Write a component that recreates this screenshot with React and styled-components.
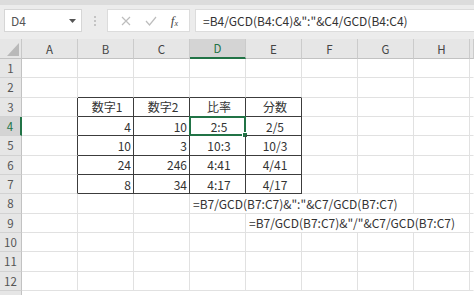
import styled, { createGlobalStyle } from "styled-components";

const GlobalStyle = createGlobalStyle`
  html, body {
    margin: 0;
    padding: 0;
    background: #ffffff;
    overflow: hidden;
  }
  body {
    font-family: "Noto Sans CJK JP", "Noto Sans", sans-serif;
  }
`;

const Page = styled.div`
  width: 474px;
  height: 295px;
  display: flex;
  flex-direction: column;
  overflow: hidden;
  background: #ffffff;
`;

const Toolbar = styled.div`
  flex-shrink: 0;
  height: 39px;
  box-sizing: border-box;
  background: #ececec;
  border-top: 5px solid #dcdcdc;
  display: flex;
  align-items: flex-start;
  padding: 4px 0 0 4px;
`;

const NameBox = styled.div`
  width: 78px;
  height: 23px;
  box-sizing: border-box;
  background: #fff;
  border: 1px solid #d6d6d6;
  display: flex;
  align-items: center;
  justify-content: space-between;
  padding: 0 5px 0 6px;
  font-size: 12px;
  color: #555;
`;

const Dots = styled.div`
  width: 25px;
  height: 23px;
  display: flex;
  flex-direction: column;
  align-items: center;
  justify-content: center;
  gap: 2px;
  & span {
    width: 2px;
    height: 2px;
    background: #c4c4c4;
  }
`;

const Buttons = styled.div`
  width: 83px;
  height: 23px;
  box-sizing: border-box;
  background: #fff;
  border: 1px solid #dcdcdc;
  display: flex;
  align-items: center;
  justify-content: space-around;
  padding: 0 4px 0 6px;
`;

const Fx = styled.span`
  font-family: "Liberation Serif", serif;
  font-style: italic;
  font-size: 13px;
  color: #444;
  & sub {
    font-size: 8px;
    vertical-align: -1px;
  }
`;

const FormulaBar = styled.div`
  flex: 1;
  height: 23px;
  margin-left: 5px;
  box-sizing: border-box;
  background: #fff;
  border: 1px solid #dcdcdc;
  border-right: none;
  display: flex;
  align-items: center;
  padding-left: 7px;
  font-size: 12px;
  color: #333;
  white-space: nowrap;
`;

const Sheet = styled.div`
  flex-shrink: 0;
  display: grid;
  grid-template-columns: 22px repeat(8, 56px) 1fr;
  grid-template-rows: 20px repeat(13, 19.33px);
`;

const Corner = styled.div`
  background: #e6e6e6;
  border-right: 1px solid #c8c8c8;
  border-bottom: 1px solid #c2c2c2;
  box-sizing: border-box;
  display: flex;
  align-items: flex-end;
  justify-content: flex-end;
  padding: 0 2px 2px 0;
  &::after {
    content: "";
    width: 12px;
    height: 13px;
    background: #b9b9b9;
    clip-path: polygon(100% 0, 100% 100%, 0 100%);
  }
`;

const ColHead = styled.div`
  box-sizing: border-box;
  background: ${(p) => (p.$active ? "#d4d4d4" : "#e6e6e6")};
  border-right: 1px solid #cbcbcb;
  border-bottom: ${(p) => (p.$active ? "2px solid #217346" : "1px solid #c2c2c2")};
  display: flex;
  align-items: center;
  justify-content: center;
  font-size: 11.5px;
  color: ${(p) => (p.$active ? "#217346" : "#444")};
`;

const RowHead = styled.div`
  box-sizing: border-box;
  background: ${(p) => (p.$active ? "#d4d4d4" : "#e6e6e6")};
  border-right: ${(p) => (p.$active ? "2px solid #217346" : "1px solid #c2c2c2")};
  border-bottom: 1px solid #d2d2d2;
  display: flex;
  align-items: center;
  justify-content: center;
  font-size: 11.5px;
  color: ${(p) => (p.$active ? "#217346" : "#555")};
`;

const Cell = styled.div`
  box-sizing: border-box;
  position: relative;
  grid-column: span ${(p) => p.$span || 1};
  border-right: 1px solid ${(p) => p.$r || "#e1e1e1"};
  border-bottom: 1px solid ${(p) => p.$b || "#e1e1e1"};
  display: flex;
  align-items: center;
  justify-content: ${(p) => p.$align || "flex-start"};
  padding: 0 ${(p) => (p.$align === "flex-end" ? "2px" : "0")} 0 3px;
  white-space: nowrap;
  font-size: 12px;
  color: #333;
`;

const Selection = styled.div`
  position: absolute;
  left: -1px;
  top: -1px;
  right: -1px;
  bottom: -1px;
  border: 2px solid #217346;
  pointer-events: none;
  &::after {
    content: "";
    position: absolute;
    right: -4px;
    bottom: -4px;
    width: 4px;
    height: 4px;
    background: #217346;
    border: 1px solid #fff;
  }
`;

const DARK = "#3c3c3c";

const table = {
  3: ["数字1", "数字2", "比率", "分数"],
  4: ["4", "10", "2:5", "2/5"],
  5: ["10", "3", "10:3", "10/3"],
  6: ["24", "246", "4:41", "4/41"],
  7: ["8", "34", "4:17", "4/17"],
};

const overflow = {
  8: { col: 3, span: 4, text: '=B7/GCD(B7:C7)&":"&C7/GCD(B7:C7)' },
  9: { col: 4, span: 4, text: '=B7/GCD(B7:C7)&"/"&C7/GCD(B7:C7)' },
};

const COLS = ["A", "B", "C", "D", "E", "F", "G", "H", ""];

const renderRow = (r) => {
  const cells = [
    <RowHead key={`h${r}`} $active={r === 4}>
      {r}
    </RowHead>,
  ];
  let c = 0;
  while (c < COLS.length) {
    const ov = overflow[r];
    if (ov && ov.col === c) {
      cells.push(
        <Cell key={`${r}-${c}`} $span={ov.span}>
          {ov.text}
        </Cell>
      );
      c += ov.span;
      continue;
    }
    const inTable = table[r] && c >= 1 && c <= 4;
    const leftOfTable = table[r] && c === 0;
    const aboveTable = r === 2 && c >= 1 && c <= 4;
    const text = inTable ? table[r][c - 1] : "";
    const align = inTable ? (r > 3 && c <= 2 ? "flex-end" : "center") : "flex-start";
    cells.push(
      <Cell
        key={`${r}-${c}`}
        $r={inTable || leftOfTable ? DARK : c === 8 ? "transparent" : undefined}
        $b={inTable || aboveTable ? DARK : undefined}
        $align={align}
      >
        {text}
        {r === 4 && c === 3 && <Selection />}
      </Cell>
    );
    c += 1;
  }
  return cells;
};

export default function App() {
  const rows = [];
  for (let r = 1; r <= 12; r++) rows.push(...renderRow(r));

  return (
    <Page>
      <GlobalStyle />
      <Toolbar>
        <NameBox>
          D4
          <svg width="7" height="4" viewBox="0 0 7 4">
            <path d="M0 0h7L3.5 4z" fill="#555" />
          </svg>
        </NameBox>
        <Dots>
          <span />
          <span />
          <span />
        </Dots>
        <Buttons>
          <svg width="10" height="10" viewBox="0 0 10 10">
            <path d="M1 1l8 8M9 1l-8 8" stroke="#bdbdbd" strokeWidth="1.2" />
          </svg>
          <svg width="12" height="10" viewBox="0 0 12 10">
            <path d="M1 5l3.5 4L11 1" stroke="#bdbdbd" strokeWidth="1.2" fill="none" />
          </svg>
          <Fx>
            f<sub>x</sub>
          </Fx>
        </Buttons>
        <FormulaBar>=B4/GCD(B4:C4)&amp;":"&amp;C4/GCD(B4:C4)</FormulaBar>
      </Toolbar>
      <Sheet>
        <Corner />
        {COLS.map((name, i) => (
          <ColHead key={i} $active={name === "D"}>
            {name}
          </ColHead>
        ))}
        {rows}
        <RowHead />
      </Sheet>
    </Page>
  );
}
